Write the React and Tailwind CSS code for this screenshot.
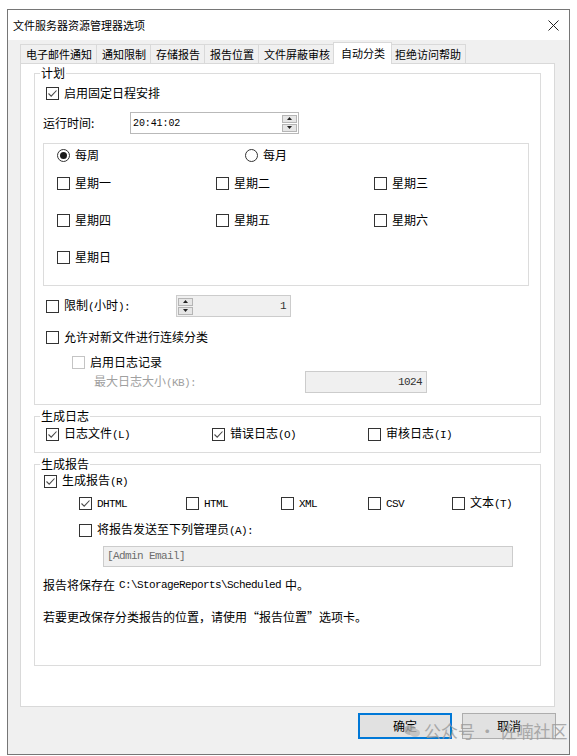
import React from 'react';

const cjk = "font-['Noto_Sans_CJK_SC',sans-serif]";
const mono = "font-['Liberation_Mono','Noto_Sans_CJK_SC',monospace] text-[11px] tracking-[-0.6px]";

function Check({ checked, disabled }) {
  return (
    <span
      className={
        disabled
          ? 'flex h-[13px] w-[13px] shrink-0 items-center justify-center border border-[#c4c4c4] bg-white'
          : 'flex h-[13px] w-[13px] shrink-0 items-center justify-center border border-[#333333] bg-white'
      }
    >
      {checked && (
        <svg width="11" height="11" viewBox="0 0 11 11">
          <path d="M1.5 5.5 L4.2 8.2 L9.5 2.5" fill="none" stroke="#4a4a4a" strokeWidth="1.1" />
        </svg>
      )}
    </span>
  );
}

function Radio({ checked }) {
  return (
    <span className="flex h-[13px] w-[13px] shrink-0 items-center justify-center rounded-full border border-[#333333] bg-white">
      {checked && <span className="h-[7px] w-[7px] rounded-full bg-[#1a1a1a]" />}
    </span>
  );
}

function Item({ checked, disabled, children, className = '' }) {
  return (
    <div className={`flex h-[18px] items-center gap-[5px] ${className}`}>
      <Check checked={checked} disabled={disabled} />
      <span className="leading-none">{children}</span>
    </div>
  );
}

function Spin({ className = '' }) {
  return (
    <div className={`flex w-[15px] flex-col gap-[1px] ${className}`}>
      <div className="flex h-[8px] items-center justify-center border border-[#b5b5b5] bg-[#e6e6e6]">
        <svg width="5" height="3" viewBox="0 0 5 3"><path d="M0 3 L2.5 0 L5 3 Z" fill="#222" /></svg>
      </div>
      <div className="flex h-[8px] items-center justify-center border border-[#b5b5b5] bg-[#e6e6e6]">
        <svg width="5" height="3" viewBox="0 0 5 3"><path d="M0 0 L2.5 3 L5 0 Z" fill="#222" /></svg>
      </div>
    </div>
  );
}

function Group({ title, className = '', children }) {
  return (
    <div className={`relative border border-[#dcdcdc] ${className}`}>
      <span className="absolute left-[5px] top-[-9px] bg-white px-[1px] text-[12px] leading-[16px]">{title}</span>
      {children}
    </div>
  );
}

const tabs = ['电子邮件通知', '通知限制', '存储报告', '报告位置', '文件屏蔽审核', '自动分类', '拒绝访问帮助'];

export default function App() {
  return (
    <div className={`relative h-[756px] w-[577px] overflow-hidden bg-white pl-[7px] pt-[9px] text-black ${cjk}`}>
      <div className="flex h-[746px] w-[563px] flex-col border border-[#767676]">
        {/* title bar */}
        <div className="flex h-[30px] items-center justify-between bg-white pl-[5px] pr-[10px]">
          <span className="text-[11px] leading-none">文件服务器资源管理器选项</span>
          <svg width="11" height="11" viewBox="0 0 11 11">
            <path d="M0.5 0.5 L10.5 10.5 M10.5 0.5 L0.5 10.5" stroke="#222" strokeWidth="1" />
          </svg>
        </div>

        <div className="flex flex-1 flex-col bg-[#f0f0f0] pl-[12px] pr-[14px] pt-[2px]">
          {/* tabs */}
          <div className="flex h-[21px] items-end">
            {tabs.map((t, i) =>
              t === '自动分类' ? (
                <div
                  key={t}
                  className="relative z-10 -mb-px -ml-[2px] -mr-[2px] flex h-[22px] items-center border border-b-0 border-[#d9d9d9] bg-white pl-[7px] pr-[6px] text-[11px] leading-none"
                >
                  {t}
                </div>
              ) : (
                <div
                  key={t}
                  className={
                    i === 0
                      ? 'flex h-[19px] items-center border border-b-0 border-[#d9d9d9] bg-[#f0f0f0] pl-[5px] pr-[4px] text-[11px] leading-none'
                      : 'flex h-[19px] items-center border-r border-t border-[#d9d9d9] bg-[#f0f0f0] pl-[5px] pr-[4px] text-[11px] leading-none'
                  }
                >
                  {t}
                </div>
              )
            )}
          </div>

          {/* panel */}
          <div className="flex h-[644px] flex-col border border-[#d9d9d9] bg-white pl-[13px] pt-[9px] text-[12px]">
            <Group title="计划" className="h-[332px] w-[507px] pl-[8px]">
              <Item checked className="ml-[3px] mt-[10px]">启用固定日程安排</Item>

              <div className="mt-[10px] flex h-[22px] items-center">
                <span className="w-[87px] leading-none">运行时间:</span>
                <div className="flex h-[22px] w-[169px] items-center justify-between border border-[#b9b9b9] pl-[2px] pr-[1px]">
                  <span className="font-['Liberation_Mono',monospace] text-[10px] tracking-[-0.1px]">20:41:02</span>
                  <Spin />
                </div>
              </div>

              <div className="mt-[9px] flex h-[143px] w-[486px] flex-col border border-[#dcdcdc] pl-[13px] pt-[2px]">
                <div className="flex h-[18px] items-center">
                  <div className="flex w-[188px] items-center gap-[5px]">
                    <Radio checked />
                    <span className="leading-none">每周</span>
                  </div>
                  <div className="flex items-center gap-[5px]">
                    <Radio />
                    <span className="leading-none">每月</span>
                  </div>
                </div>
                <div className="mt-[10px] grid grid-cols-[159px_158px_120px] gap-y-[19px]">
                  <Item>星期一</Item>
                  <Item>星期二</Item>
                  <Item>星期三</Item>
                  <Item>星期四</Item>
                  <Item>星期五</Item>
                  <Item>星期六</Item>
                  <Item>星期日</Item>
                </div>
              </div>

              <div className="ml-[3px] mt-[9px] flex h-[22px] items-center">
                <Item className="w-[130px]">
                  限制<span className={mono}>(</span>小时<span className={mono}>):</span>
                </Item>
                <div className="flex h-[22px] w-[115px] items-center justify-between border border-[#cccccc] bg-[#f0f0f0] pl-[1px] pr-[4px]">
                  <Spin />
                  <span className={`${mono} text-[#333]`}>1</span>
                </div>
              </div>

              <Item className="ml-[3px] mt-[11px]">允许对新文件进行连续分类</Item>
              <Item disabled className="ml-[29px] mt-[7px]">启用日志记录</Item>

              <div className="flex h-[22px] items-center">
                <span className="ml-[51px] w-[211px] leading-none text-[#a0a0a0]">
                  最大日志大小<span className={mono}>(KB):</span>
                </span>
                <div className="flex h-[22px] w-[122px] items-center justify-end border border-[#cccccc] bg-[#f0f0f0] pr-[4px]">
                  <span className={`${mono} text-[#333]`}>1024</span>
                </div>
              </div>
            </Group>

            <Group title="生成日志" className="mt-[11px] flex h-[37px] w-[507px] pl-[11px] pt-[8px]">
              <Item checked className="w-[166px]">
                日志文件<span className={mono}>(L)</span>
              </Item>
              <Item checked className="w-[156px]">
                错误日志<span className={mono}>(O)</span>
              </Item>
              <Item>
                审核日志<span className={mono}>(I)</span>
              </Item>
            </Group>

            <Group title="生成报告" className="mt-[11px] flex h-[202px] w-[507px] flex-col pl-[9px]">
              <Item checked className="mt-[7px]">
                生成报告<span className={mono}>(R)</span>
              </Item>
              <div className="ml-[35px] mt-[4px] flex">
                <Item checked className="w-[107px]"><span className={mono}>DHTML</span></Item>
                <Item className="w-[95px]"><span className={mono}>HTML</span></Item>
                <Item className="w-[87px]"><span className={mono}>XML</span></Item>
                <Item className="w-[84px]"><span className={mono}>CSV</span></Item>
                <Item>
                  文本<span className={mono}>(T)</span>
                </Item>
              </div>
              <Item className="ml-[35px] mt-[9px]">
                将报告发送至下列管理员<span className={mono}>(A):</span>
              </Item>
              <div className="ml-[59px] mt-[7px] flex h-[21px] w-[410px] items-center border border-[#cccccc] bg-[#f0f0f0] pl-[3px]">
                <span className={`${mono} text-[#6d6d6d]`}>[Admin Email]</span>
              </div>
              <div className="-ml-[1px] mt-[9px] flex h-[18px] items-center leading-none">
                报告将保存在 <span className={`${mono} ml-[4px] mr-[4px]`}>C:\StorageReports\Scheduled</span> 中。
              </div>
              <div className="-ml-[1px] mt-[14px] flex h-[18px] items-center leading-none">
                若要更改保存分类报告的位置，请使用“报告位置”选项卡。
              </div>
            </Group>
          </div>

          {/* buttons */}
          <div className="mt-[6px] flex justify-end gap-[10px] pr-0">
            <div className="flex h-[26px] w-[94px] items-center justify-center border-2 border-[#0078d7] bg-[#e1e1e1] text-[12px] leading-none">
              确定
            </div>
            <div className="-mr-[1px] flex h-[26px] w-[94px] items-center justify-center border border-[#adadad] bg-[#e1e1e1] text-[12px] leading-none">
              取消
            </div>
          </div>
        </div>
      </div>

      {/* watermark */}
      <div className="pointer-events-none absolute left-[404px] top-[722px] flex items-center gap-[4px] text-[17px] leading-none text-[#9a9a9a] opacity-80">
        <svg width="16" height="14" viewBox="0 0 16 14">
          <ellipse cx="6" cy="6" rx="6" ry="5" fill="#a8a8a8" />
          <ellipse cx="11" cy="9" rx="5" ry="4" fill="#bdbdbd" />
        </svg>
        <span>公众号 · 佐喃社区</span>
      </div>
    </div>
  );
}
